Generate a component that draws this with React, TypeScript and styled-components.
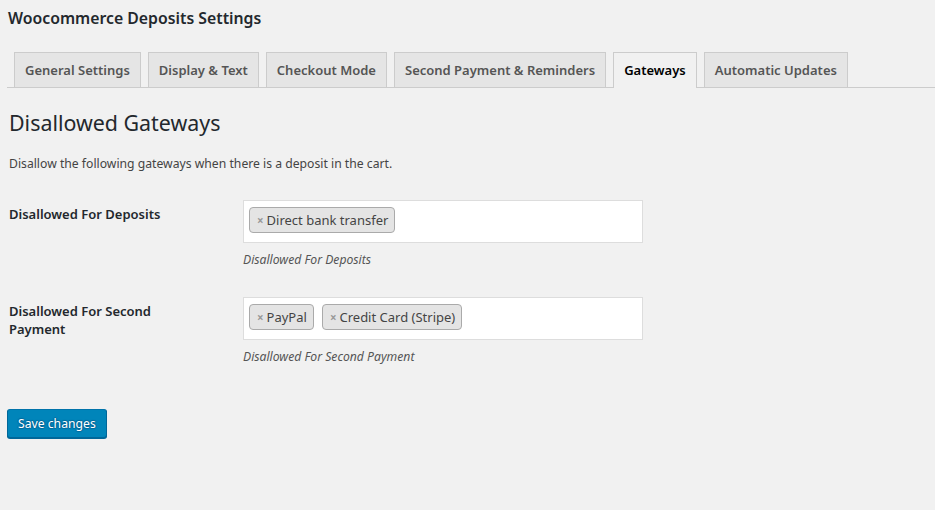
import React from "react";
import styled, { createGlobalStyle } from "styled-components";

const Global = createGlobalStyle`
  html, body { margin: 0; padding: 0; background: #f1f1f1; }
  body {
    font-family: "Noto Sans", "Open Sans", sans-serif;
    color: #444;
    font-size: 12.2px;
  }
`;

const Wrap = styled.div`
  padding: 3px 0 0 7px;
  width: 928px;
  height: 507px;
  overflow: hidden;
`;

const Title = styled.h1`
  margin: 0;
  font-size: 15.8px;
  font-weight: 600;
  line-height: 30px;
  color: #23282d;
  padding-left: 1px;
`;

const TabBar = styled.nav`
  display: flex;
  margin-top: 19px;
  border-bottom: 1px solid #ccc;
  height: 35px;
  align-items: flex-end;
`;

const Tab = styled.a<{ $active?: boolean }>`
  display: block;
  box-sizing: border-box;
  height: ${(p) => (p.$active ? "36px" : "35px")};
  margin-left: 7px;
  margin-bottom: ${(p) => (p.$active ? "-1px" : "0")};
  padding: 5px 10px;
  border: 1px solid #ccc;
  border-bottom: none;
  background: ${(p) => (p.$active ? "#f1f1f1" : "#e5e5e5")};
  color: ${(p) => (p.$active ? "#000" : "#555")};
  font-size: 13px;
  font-weight: 600;
  line-height: 24px;
  white-space: nowrap;
  text-decoration: none;
  cursor: pointer;
`;

const SectionTitle = styled.h2`
  margin: 20px 0 0 2px;
  font-size: 21.4px;
  font-weight: 400;
  line-height: 30px;
  color: #23282d;
`;

const Intro = styled.p`
  margin: 16px 0 0 2px;
  font-size: 12.2px;
  line-height: 20px;
  color: #444;
`;

const FormGrid = styled.div`
  display: grid;
  grid-template-columns: 236px 400px;
  margin-top: 26px;
`;

const Label = styled.div`
  font-size: 13px;
  font-weight: 600;
  line-height: 18px;
  color: #23282d;
  padding: 5px 60px 0 2px;
`;

const Field = styled.div`
  display: flex;
  flex-direction: column;
  padding-bottom: 28px;
`;

const SelectBox = styled.div`
  box-sizing: border-box;
  width: 400px;
  height: 43px;
  background: #fff;
  border: 1px solid #ddd;
  display: flex;
  align-items: flex-start;
  gap: 8px;
  padding: 6px 5px 0;
`;

const Chip = styled.span`
  box-sizing: border-box;
  display: inline-flex;
  align-items: center;
  height: 26px;
  padding: 0 6px 0 7px;
  background: #e4e4e4;
  border: 1px solid #aaa;
  border-radius: 4px;
  font-size: 13px;
  color: #444;
  white-space: nowrap;
`;

const Remove = styled.span`
  color: #999;
  font-weight: 700;
  font-size: 11.5px;
  margin-right: 3px;
`;

const Hint = styled.p`
  margin: 8px 0 0;
  font-size: 12.2px;
  font-style: italic;
  line-height: 18px;
  color: #555;
`;

const SaveButton = styled.button`
  margin-top: 15px;
  box-sizing: border-box;
  height: 29px;
  padding: 0 10px;
  background: #0085ba;
  border: 1px solid;
  border-color: #0073aa #006799 #006799;
  border-radius: 3px;
  box-shadow: 0 1px 0 #006799;
  color: #fff;
  font-family: inherit;
  font-size: 12.2px;
  line-height: 26px;
  text-shadow: 0 -1px 1px #006799, 1px 0 1px #006799, 0 1px 1px #006799, -1px 0 1px #006799;
  cursor: pointer;
`;

const tabs = [
  "General Settings",
  "Display & Text",
  "Checkout Mode",
  "Second Payment & Reminders",
  "Gateways",
  "Automatic Updates",
];

const rows = [
  { label: "Disallowed For Deposits", chips: ["Direct bank transfer"], hint: "Disallowed For Deposits" },
  { label: "Disallowed For Second Payment", chips: ["PayPal", "Credit Card (Stripe)"], hint: "Disallowed For Second Payment" },
];

export default function App() {
  return (
    <>
      <Global />
      <Wrap>
        <Title>Woocommerce Deposits Settings</Title>
        <TabBar>
          {tabs.map((t) => (
            <Tab key={t} $active={t === "Gateways"}>
              {t}
            </Tab>
          ))}
        </TabBar>
        <SectionTitle>Disallowed Gateways</SectionTitle>
        <Intro>Disallow the following gateways when there is a deposit in the cart.</Intro>
        <FormGrid>
          {rows.map((r) => (
            <React.Fragment key={r.label}>
              <Label>{r.label}</Label>
              <Field>
                <SelectBox>
                  {r.chips.map((c) => (
                    <Chip key={c}>
                      <Remove>×</Remove>
                      {c}
                    </Chip>
                  ))}
                </SelectBox>
                <Hint>{r.hint}</Hint>
              </Field>
            </React.Fragment>
          ))}
        </FormGrid>
        <SaveButton>Save changes</SaveButton>
      </Wrap>
    </>
  );
}
